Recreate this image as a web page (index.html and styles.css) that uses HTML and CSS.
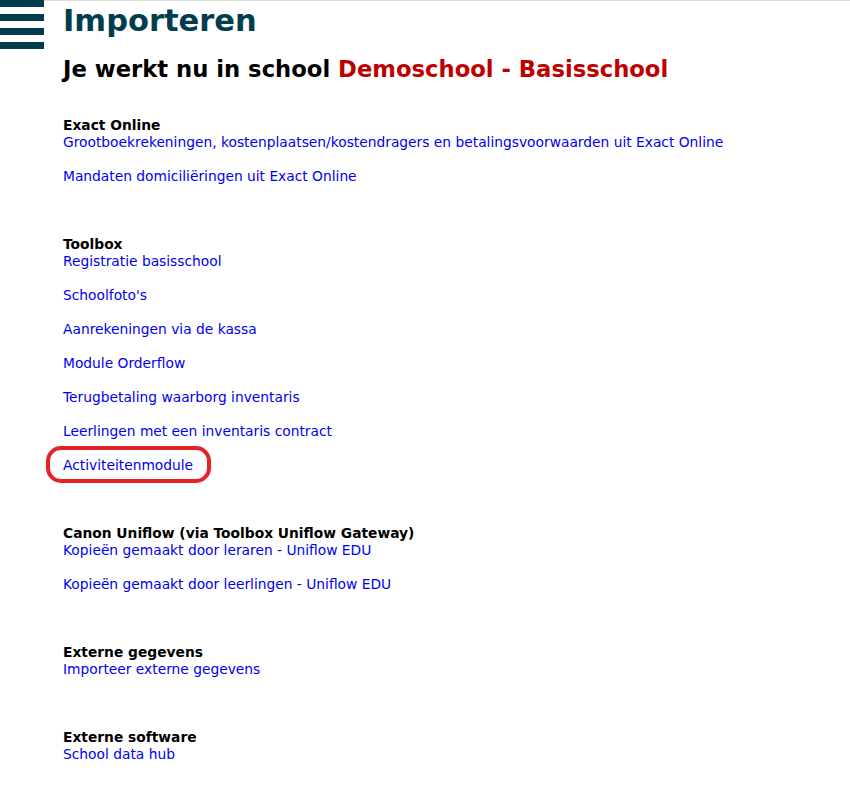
FILE: index.html
```html
<!DOCTYPE html>
<html lang="nl">
<head>
<meta charset="utf-8">
<title>Importeren</title>
<link rel="stylesheet" href="styles.css">
</head>
<body>
<div class="page">
  <button class="menu" aria-label="Menu">
    <span class="bar"></span><span class="bar"></span><span class="bar"></span><span class="bar"></span>
  </button>
  <main class="content">
    <h1 class="title">Importeren</h1>
    <h2 class="school">Je werkt nu in school <span class="school-name">Demoschool - Basisschool</span></h2>

    <section class="group">
      <h3 class="group-title">Exact Online</h3>
      <ul class="links">
        <li><a href="#">Grootboekrekeningen, kostenplaatsen/kostendragers en betalingsvoorwaarden uit Exact Online</a></li>
        <li><a href="#">Mandaten domiciliëringen uit Exact Online</a></li>
      </ul>
    </section>

    <section class="group">
      <h3 class="group-title">Toolbox</h3>
      <ul class="links">
        <li><a href="#">Registratie basisschool</a></li>
        <li><a href="#">Schoolfoto's</a></li>
        <li><a href="#">Aanrekeningen via de kassa</a></li>
        <li><a href="#">Module Orderflow</a></li>
        <li><a href="#">Terugbetaling waarborg inventaris</a></li>
        <li><a href="#">Leerlingen met een inventaris contract</a></li>
        <li class="highlight"><a href="#">Activiteitenmodule</a></li>
      </ul>
    </section>

    <section class="group">
      <h3 class="group-title">Canon Uniflow (via Toolbox Uniflow Gateway)</h3>
      <ul class="links">
        <li><a href="#">Kopieën gemaakt door leraren - Uniflow EDU</a></li>
        <li><a href="#">Kopieën gemaakt door leerlingen - Uniflow EDU</a></li>
      </ul>
    </section>

    <section class="group">
      <h3 class="group-title">Externe gegevens</h3>
      <ul class="links">
        <li><a href="#">Importeer externe gegevens</a></li>
      </ul>
    </section>

    <section class="group">
      <h3 class="group-title">Externe software</h3>
      <ul class="links">
        <li><a href="#">School data hub</a></li>
      </ul>
    </section>
  </main>
</div>
</body>
</html>
```

FILE: styles.css
```css
html, body {
  margin: 0;
  padding: 0;
  background: #ffffff;
}

body {
  font-family: "DejaVu Sans", Verdana, sans-serif;
  font-size: 13.8px;
  line-height: 17px;
  color: #000000;
}

.page {
  display: flex;
  align-items: flex-start;
}

.menu {
  flex: 0 0 44px;
  width: 44px;
  height: 49px;
  padding: 0;
  margin: 0;
  border: 0;
  background: transparent;
  display: flex;
  flex-direction: column;
  justify-content: space-between;
  cursor: pointer;
}

.bar {
  display: block;
  width: 44px;
  height: 7px;
  background: #003d4f;
}

.content {
  flex: 1;
  border-top: 1px solid #dddddd;
  padding-left: 19px;
  padding-bottom: 20px;
}

.title {
  margin: 0;
  font-size: 30.5px;
  line-height: 40px;
  font-weight: bold;
  color: #003d4f;
}

.school {
  margin: 13px 0 0 0;
  font-size: 22.7px;
  line-height: 30px;
  font-weight: bold;
  color: #000000;
}

.school-name {
  color: #c00000;
}

.group {
  margin-top: 51px;
}

.school + .group {
  margin-top: 33px;
}

.group-title {
  margin: 0;
  font-size: 13.8px;
  line-height: 17px;
  font-weight: bold;
}

.links {
  list-style: none;
  margin: 0;
  padding: 0;
  display: flex;
  flex-direction: column;
  gap: 17px;
}

.links a {
  color: #0000ee;
  text-decoration: none;
}

.highlight a {
  position: relative;
}

.highlight a::after {
  content: "";
  position: absolute;
  left: -17px;
  top: -11px;
  right: -18px;
  bottom: -10px;
  border: 4px solid #e8202a;
  border-radius: 15px;
}
```
